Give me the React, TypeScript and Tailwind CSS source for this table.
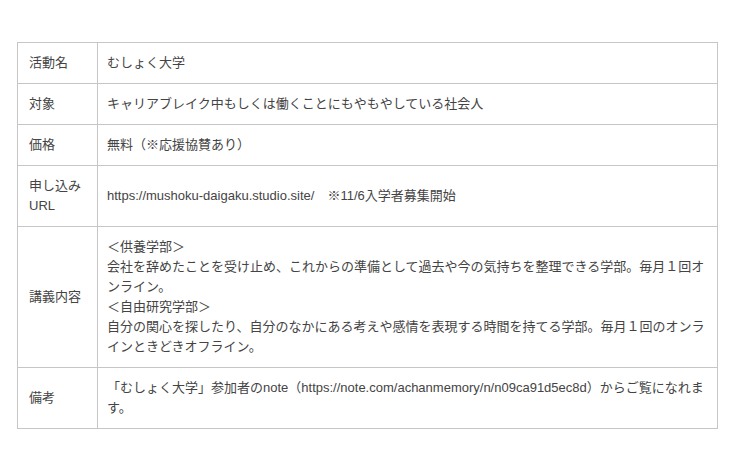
import React from 'react';

const rows: { label: React.ReactNode; body: React.ReactNode }[] = [
  { label: '活動名', body: 'むしょく大学' },
  { label: '対象', body: 'キャリアブレイク中もしくは働くことにもやもやしている社会人' },
  { label: '価格', body: '無料（※応援協賛あり）' },
  {
    label: (
      <>
        申し込み
        <br />
        URL
      </>
    ),
    body: 'https://mushoku-daigaku.studio.site/　※11/6入学者募集開始',
  },
  {
    label: '講義内容',
    body: (
      <>
        ＜供養学部＞
        <br />
        会社を辞めたことを受け止め、これからの準備として過去や今の気持ちを整理できる学部。毎月１回オンライン。
        <br />
        ＜自由研究学部＞
        <br />
        自分の関心を探したり、自分のなかにある考えや感情を表現する時間を持てる学部。毎月１回のオンラインときどきオフライン。
      </>
    ),
  },
  {
    label: '備考',
    body: '「むしょく大学」参加者のnote（https://note.com/achanmemory/n/n09ca91d5ec8d）からご覧になれます。',
  },
];

export default function App() {
  return (
    <div
      className="bg-white w-[740px] h-[469px] pt-[42px] pl-[17px]"
      style={{ fontFamily: '"Liberation Sans", "Noto Sans CJK JP", sans-serif' }}
    >
      <table className="w-[701px] border-collapse table-fixed text-[13px] leading-[20px] text-[#444]">
        <colgroup>
          <col className="w-[80px]" />
          <col />
        </colgroup>
        <tbody>
          {rows.map((r, i) => (
            <tr key={i}>
              <td className="border border-[#c6c6c6] pl-[11px] pr-[8px] py-[10px] align-middle">{r.label}</td>
              <td className="border border-[#c6c6c6] pl-[9px] pr-[11px] py-[10px] align-middle">{r.body}</td>
            </tr>
          ))}
        </tbody>
      </table>
    </div>
  );
}
